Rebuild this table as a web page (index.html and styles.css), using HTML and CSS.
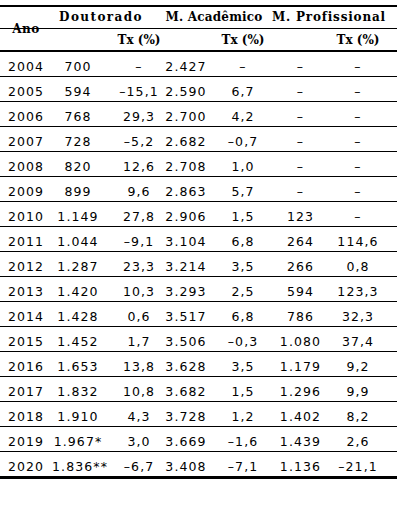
FILE: index.html
```html
<!DOCTYPE html>
<html lang="pt">
<head>
    <meta charset="UTF-8">
    <title>Pós-graduação</title>
    <link rel="stylesheet" href="styles.css">
</head>
<body>
    <div class="wrap">
        <table class="dados">
            <colgroup>
                <col class="c-ano">
                <col class="c-n1">
                <col class="c-t1">
                <col class="c-n2">
                <col class="c-t2">
                <col class="c-n3">
                <col class="c-t3">
            </colgroup>
            <thead>
                <tr class="h1">
                    <th class="ano"><span class="ano-txt">Ano</span></th>
                    <th colspan="2" class="g-dout">Doutorado</th>
                    <th colspan="2" class="g-acad">M. Acadêmico</th>
                    <th colspan="2" class="g-prof">M. Profissional</th>
                </tr>
                <tr class="h2">
                    <th></th>
                    <th></th>
                    <th class="t1">Tx (%)</th>
                    <th></th>
                    <th class="t2">Tx (%)</th>
                    <th></th>
                    <th class="t3">Tx (%)</th>
                </tr>
            </thead>
            <tbody>
                <tr><td>2004</td><td class="n1">700</td><td class="t1">–</td><td class="n2">2.427</td><td class="t2">–</td><td>–</td><td class="t3">–</td></tr>
                <tr><td>2005</td><td class="n1">594</td><td class="t1">–15,1</td><td class="n2">2.590</td><td class="t2">6,7</td><td>–</td><td class="t3">–</td></tr>
                <tr><td>2006</td><td class="n1">768</td><td class="t1">29,3</td><td class="n2">2.700</td><td class="t2">4,2</td><td>–</td><td class="t3">–</td></tr>
                <tr><td>2007</td><td class="n1">728</td><td class="t1">–5,2</td><td class="n2">2.682</td><td class="t2">–0,7</td><td>–</td><td class="t3">–</td></tr>
                <tr><td>2008</td><td class="n1">820</td><td class="t1">12,6</td><td class="n2">2.708</td><td class="t2">1,0</td><td>–</td><td class="t3">–</td></tr>
                <tr><td>2009</td><td class="n1">899</td><td class="t1">9,6</td><td class="n2">2.863</td><td class="t2">5,7</td><td>–</td><td class="t3">–</td></tr>
                <tr><td>2010</td><td class="n1">1.149</td><td class="t1">27,8</td><td class="n2">2.906</td><td class="t2">1,5</td><td>123</td><td class="t3">–</td></tr>
                <tr><td>2011</td><td class="n1">1.044</td><td class="t1">–9,1</td><td class="n2">3.104</td><td class="t2">6,8</td><td>264</td><td class="t3">114,6</td></tr>
                <tr><td>2012</td><td class="n1">1.287</td><td class="t1">23,3</td><td class="n2">3.214</td><td class="t2">3,5</td><td>266</td><td class="t3">0,8</td></tr>
                <tr><td>2013</td><td class="n1">1.420</td><td class="t1">10,3</td><td class="n2">3.293</td><td class="t2">2,5</td><td>594</td><td class="t3">123,3</td></tr>
                <tr><td>2014</td><td class="n1">1.428</td><td class="t1">0,6</td><td class="n2">3.517</td><td class="t2">6,8</td><td>786</td><td class="t3">32,3</td></tr>
                <tr><td>2015</td><td class="n1">1.452</td><td class="t1">1,7</td><td class="n2">3.506</td><td class="t2">–0,3</td><td>1.080</td><td class="t3">37,4</td></tr>
                <tr><td>2016</td><td class="n1">1.653</td><td class="t1">13,8</td><td class="n2">3.628</td><td class="t2">3,5</td><td>1.179</td><td class="t3">9,2</td></tr>
                <tr><td>2017</td><td class="n1">1.832</td><td class="t1">10,8</td><td class="n2">3.682</td><td class="t2">1,5</td><td>1.296</td><td class="t3">9,9</td></tr>
                <tr><td>2018</td><td class="n1">1.910</td><td class="t1">4,3</td><td class="n2">3.728</td><td class="t2">1,2</td><td>1.402</td><td class="t3">8,2</td></tr>
                <tr><td>2019</td><td class="n1">1.967*</td><td class="t1">3,0</td><td class="n2">3.669</td><td class="t2">–1,6</td><td>1.439</td><td class="t3">2,6</td></tr>
                <tr class="last"><td>2020</td><td class="n1">1.836**</td><td class="t1">–6,7</td><td class="n2">3.408</td><td class="t2">–7,1</td><td>1.136</td><td class="t3">–21,1</td></tr>
            </tbody>
        </table>
    </div>
</body>
</html>
```

FILE: styles.css
```css
/* Base */
body {
    margin: 0;
    padding: 0;
    background-color: #fff;
    color: #000;
}
.wrap {
    padding: 5px 3px 0 0;
}
/* Table */
.dados {
    width: 397px;
    table-layout: fixed;
    border-collapse: collapse;
    border-top: 2px solid #000;
}
.c-ano { width: 52px; }
.c-n1 { width: 56px; }
.c-t1 { width: 56px; }
.c-n2 { width: 50px; }
.c-t2 { width: 58px; }
.c-n3 { width: 57px; }
.c-t3 { width: 68px; }
/* Header */
.dados th {
    font-family: "DejaVu Serif", serif;
    font-weight: bold;
    font-size: 12px;
    line-height: 14px;
    letter-spacing: 0;
    white-space: nowrap;
    text-align: center;
    padding: 0;
}
.h1 th {
    height: 17px;
    border-bottom: 1px solid #000;
    vertical-align: bottom;
    padding-bottom: 4px;
}
.h2 th {
    height: 18px;
    border-bottom: 2px solid #000;
    vertical-align: bottom;
    padding-bottom: 3px;
}
/* "Ano" hangs below the first header rule, as in the source document */
.h1 th.ano {
    padding-bottom: 0;
    letter-spacing: 0.5px;
}
.ano-txt {
    display: block;
    line-height: 12px;
    margin-bottom: -7px;
}
.dados .g-dout { padding-right: 14px; letter-spacing: 1.4px; }
.dados .g-acad { padding-right: 8px; letter-spacing: 0.2px; }
.dados .g-prof { padding-right: 19px; letter-spacing: 0.8px; }
.h2 .t1 { padding-left: 8px; }
.h2 .t3 { padding-right: 10px; }
/* Body cells */
.dados td {
    font-family: "DejaVu Sans", sans-serif;
    font-size: 12.5px;
    line-height: 14px;
    letter-spacing: 1.1px;
    white-space: nowrap;
    text-align: center;
    height: 22px;
    padding: 0 0 2px 0;
    vertical-align: bottom;
    border-bottom: 1px solid #000;
}
.dados tr.last td {
    border-bottom: 3px solid #000;
}
.dados .n1 { padding-right: 4px; }
.dados .t1 { padding-left: 6px; }
.dados .n2 { padding-right: 6px; }
.dados .t3 { padding-right: 10px; }
```
